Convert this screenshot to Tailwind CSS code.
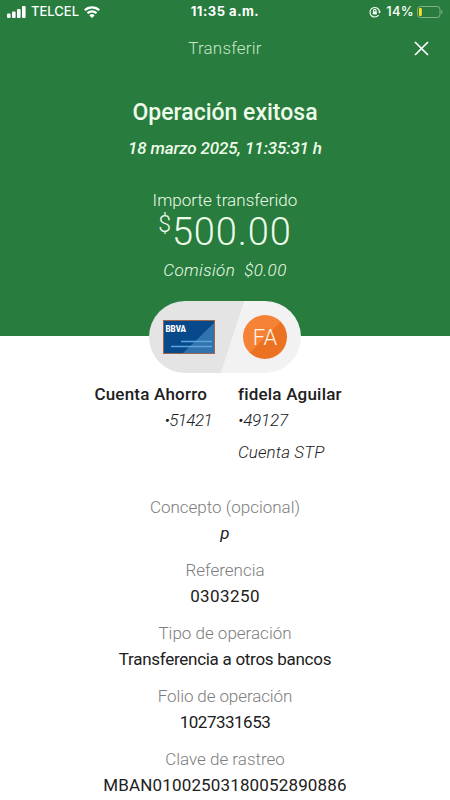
<!DOCTYPE html>
<html lang="es">
<head>
  <meta charset="UTF-8">
  <meta name="viewport" content="width=device-width, initial-scale=1.0">
  <title>Transferir</title>
  <script src="https://cdn.jsdelivr.net/npm/@tailwindcss/browser@4"></script>
</head>
<body class="bg-white text-[#202020] font-['Roboto',sans-serif] w-[450px] h-[800px] overflow-hidden whitespace-nowrap">

  <header class="bg-[#277c3e] h-[336px] text-[#eefbe9] text-center">
    <!-- Status bar -->
    <div class="grid grid-cols-3 items-center h-6 px-[7px] text-white">
      <div class="flex items-center">
        <svg class="w-[19px] h-3" viewBox="0 0 19 12" fill="currentColor">
          <rect x="0" y="7.5" width="3.6" height="4.5" rx="1"/>
          <rect x="5" y="5.5" width="3.6" height="6.5" rx="1"/>
          <rect x="10" y="3" width="3.6" height="9" rx="1"/>
          <rect x="15" y="0" width="3.6" height="12" rx="1"/>
        </svg>
        <span class="ml-[5px] text-[13px] font-medium font-['Inter',sans-serif]">TELCEL</span>
        <svg class="ml-[5px] w-4 h-3" viewBox="0 0 16 12" fill="none" stroke="currentColor" stroke-width="2.2">
          <path d="M.8 4.3a10.3 10.3 0 0 1 14.4 0M3.5 7.2a6.4 6.4 0 0 1 9 0"/>
          <path d="M8 12 5.4 9.4a3.7 3.7 0 0 1 5.2 0z" fill="currentColor" stroke="none"/>
        </svg>
      </div>
      <div class="text-[13px] font-bold tracking-[0.5px] font-['Inter',sans-serif]">11:35 a.m.</div>
      <div class="flex items-center justify-end">
        <svg class="w-3 h-3" viewBox="0 0 12 12" fill="none" stroke="currentColor" stroke-width="1.1">
          <path d="M9.6 9.2A4.8 4.8 0 1 1 10.6 6"/>
          <path d="M9 5.4h3L10.5 7.6z" fill="currentColor" stroke="none"/>
          <rect x="3.8" y="5.4" width="4" height="3" fill="currentColor" stroke="none"/>
          <path d="M4.6 5.5V4.4a1.2 1.2 0 0 1 2.4 0v1.1"/>
        </svg>
        <span class="ml-[5px] text-[13px] font-medium tracking-[0.3px] font-['Inter',sans-serif]">14%</span>
        <svg class="ml-[3px] w-[26px] h-3" viewBox="0 0 26 12">
          <rect x=".5" y=".5" width="22.5" height="11" rx="3" fill="none" stroke="#83b088"/>
          <path d="M24.3 4v4a2.2 2.2 0 0 0 0-4z" fill="#83b088"/>
          <rect x="2" y="2" width="2.8" height="8" rx="1" fill="#fbe12b"/>
        </svg>
      </div>
    </div>

    <!-- Title bar -->
    <div class="grid grid-cols-3 items-center h-12 px-[21px]">
      <span></span>
      <h1 class="pt-px text-[17px] font-light tracking-[0.2px] text-[#c6e6c5]">Transferir</h1>
      <svg class="justify-self-end w-[15px] h-[15px]" viewBox="0 0 15 15" stroke="#fff" stroke-width="1.7">
        <path d="M1 1l13 13M14 1 1 14"/>
      </svg>
    </div>

    <h2 class="mt-[25px] h-8 leading-8 text-[23px] font-medium">Operación exitosa</h2>
    <p class="mt-[7px] h-6 leading-6 text-[17px] font-medium tracking-[-0.15px] italic">18 marzo 2025, 11:35:31 h</p>

    <p class="mt-7 h-6 leading-6 text-[17px] font-light tracking-[0.05px]">Importe transferido</p>
    <p class="flex justify-center h-10 leading-10 text-[38px] font-light tracking-[0.9px]"><span class="text-[23px] leading-[26px]">$</span>500.00</p>
    <p class="mt-[6px] h-6 leading-6 text-[17px] font-light tracking-[0.4px] italic">Comisión &nbsp;$0.00</p>
  </header>

  <!-- Origin and destination -->
  <div class="relative mx-auto -mt-[35px] flex items-center w-[152px] h-[72px] rounded-full overflow-hidden bg-linear-[108deg,#e4e4e5_54%,#f2f2f3_54.5%]">
    <svg class="ml-[14px] w-[52px] h-[34px]" viewBox="0 0 52 34">
      <rect x=".5" y=".5" width="51" height="33" fill="#07498b" stroke="#9b654f"/>
      <path d="M20 33 51 3v30z" fill="#3272ad"/>
      <path d="M18 21.5h31M8 26.5h41" stroke="#5ba7dc" stroke-width="1.6"/>
      <text x="2.5" y="11.5" textLength="20.5" lengthAdjust="spacingAndGlyphs" font-size="9" font-weight="900" fill="#fff">BBVA</text>
    </svg>
    <div class="ml-7 flex items-center justify-center w-11 h-11 rounded-full bg-linear-[135deg,#f58235_50%,#ec7223_50.5%] text-[#fff5e6] text-[22px] font-[350]">FA</div>
  </div>

  <div class="flex gap-[26px] text-[17px] leading-6">
    <div class="w-[212px] pt-[9px] text-right">
      <p class="pr-[5px] font-medium tracking-[0.2px]">Cuenta Ahorro</p>
      <p class="mt-[2px] font-[350] tracking-[-0.6px] italic">•51421</p>
    </div>
    <div class="pt-[9px]">
      <p class="font-medium tracking-[0.2px]">fidela Aguilar</p>
      <p class="mt-[2px] font-[350] tracking-[-0.2px] italic">•49127</p>
      <p class="mt-2 font-[350] tracking-[0.1px] italic">Cuenta STP</p>
    </div>
  </div>

  <!-- Transfer details -->
  <dl class="mt-[31px] flex flex-col gap-[13px] text-center text-[17px] leading-6">
    <div>
      <dt class="font-[350] text-[#7d7d7d]">Concepto (opcional)</dt>
      <dd class="mt-[2px] italic">p</dd>
    </div>
    <div>
      <dt class="font-[350] text-[#7d7d7d]">Referencia</dt>
      <dd class="mt-[2px] tracking-[0.4px]">0303250</dd>
    </div>
    <div>
      <dt class="font-[350] text-[#7d7d7d]">Tipo de operación</dt>
      <dd class="mt-[2px] tracking-[-0.28px]">Transferencia a otros bancos</dd>
    </div>
    <div>
      <dt class="font-[350] tracking-[-0.1px] text-[#7d7d7d]">Folio de operación</dt>
      <dd class="mt-[2px] tracking-[-0.5px]">1027331653</dd>
    </div>
    <div>
      <dt class="font-[350] text-[#7d7d7d]">Clave de rastreo</dt>
      <dd class="mt-[2px] tracking-[0.15px]">MBAN01002503180052890886</dd>
    </div>
  </dl>

</body>
</html>
